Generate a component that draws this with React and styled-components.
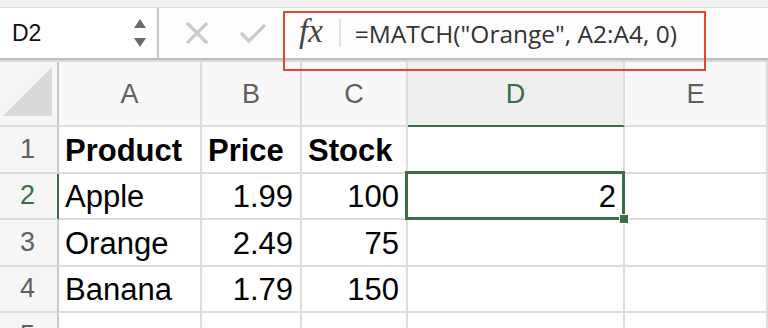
import React from 'react'
import styled, { createGlobalStyle } from 'styled-components'

const GlobalStyle = createGlobalStyle`
  html, body {
    margin: 0;
    padding: 0;
    background: #ffffff;
    overflow: hidden;
  }
  * { box-sizing: border-box; }
`

const GREEN = '#3b6e47'
const GRID = '#dcdcdc'

const columns = ['A', 'B', 'C', 'D', 'E']

const rows = [
  { n: 1, cells: [{ v: 'Product', bold: true }, { v: 'Price', bold: true }, { v: 'Stock', bold: true }, { v: '' }, { v: '' }] },
  { n: 2, cells: [{ v: 'Apple' }, { v: '1.99', num: true }, { v: '100', num: true }, { v: '2', num: true, selected: true }, { v: '' }] },
  { n: 3, cells: [{ v: 'Orange' }, { v: '2.49', num: true }, { v: '75', num: true }, { v: '' }, { v: '' }] },
  { n: 4, cells: [{ v: 'Banana' }, { v: '1.79', num: true }, { v: '150', num: true }, { v: '' }, { v: '' }] },
  { n: 5, cells: [{ v: '' }, { v: '' }, { v: '' }, { v: '' }, { v: '' }] },
]

function App() {
  return (
    <>
      <GlobalStyle />
      <Window>
        <TopStrip />
        <Toolbar>
          <NameBox>
            <CellRef>D2</CellRef>
            <Spinner>
              <svg width="14" height="34" viewBox="0 0 14 34">
                <path d="M7 3 L13 12 L1 12 Z" fill="#6b6b6b" />
                <path d="M7 31 L13 22 L1 22 Z" fill="#6b6b6b" />
              </svg>
            </Spinner>
          </NameBox>
          <FormulaArea>
            <ActionIcon>
              <svg width="24" height="22" viewBox="0 0 24 22">
                <path d="M3 2 L21 20 M21 2 L3 20" stroke="#cacaca" strokeWidth="3.2" strokeLinecap="square" />
              </svg>
            </ActionIcon>
            <ActionIcon>
              <svg width="28" height="22" viewBox="0 0 28 22">
                <path d="M2 11 L10 19 L26 3" stroke="#cacaca" strokeWidth="3.2" fill="none" />
              </svg>
            </ActionIcon>
            <Fx>fx</Fx>
            <FxDivider />
            <FormulaText>=MATCH("Orange", A2:A4, 0)</FormulaText>
          </FormulaArea>
          <Highlight />
        </Toolbar>
        <ToolbarEdge />
        <Sheet>
          <Corner>
            <svg width="54" height="54" viewBox="0 0 54 54">
              <path d="M51 2 L51 51 L2 51 Z" fill="#d9d9d9" />
            </svg>
          </Corner>
          {columns.map((c) => (
            <ColHeader key={c} $active={c === 'D'}>{c}</ColHeader>
          ))}
          {rows.map((r) => (
            <React.Fragment key={r.n}>
              <RowHeader $active={r.n === 2}>{r.n}</RowHeader>
              {r.cells.map((cell, i) => (
                <Cell key={i} $bold={cell.bold} $num={cell.num} $selected={cell.selected}>
                  {cell.v}
                  {cell.selected && (
                    <Selection>
                      <FillHandle />
                    </Selection>
                  )}
                </Cell>
              ))}
            </React.Fragment>
          ))}
        </Sheet>
      </Window>
    </>
  )
}
export default App

const Window = styled.div`
  width: 768px;
  height: 328px;
  display: flex;
  flex-direction: column;
  background: #ffffff;
  overflow: hidden;
`

const TopStrip = styled.div`
  flex-shrink: 0;
  height: 8px;
  background: #f1f1f1;
  border-bottom: 1px solid #dddddd;
`

const Toolbar = styled.div`
  flex-shrink: 0;
  position: relative;
  height: 50px;
  display: flex;
  background: #ffffff;
`

const NameBox = styled.div`
  width: 159px;
  display: flex;
  align-items: center;
  justify-content: space-between;
  padding: 0 10px 0 12px;
  border-right: 2px solid #c9c9c9;
  background: #ffffff;
`

const CellRef = styled.span`
  font-family: "Liberation Sans", Arial, sans-serif;
  font-size: 23px;
  color: #111111;
`

const Spinner = styled.div`
  display: flex;
  align-items: center;
`

const FormulaArea = styled.div`
  flex: 1;
  display: flex;
  align-items: center;
  padding-left: 26px;
  background: #fdfdfd;
`

const ActionIcon = styled.div`
  display: flex;
  align-items: center;
  margin-right: 30px;
`

const Fx = styled.span`
  font-family: "Liberation Serif", "Times New Roman", serif;
  font-style: italic;
  font-size: 33px;
  color: #444444;
  margin-left: 2px;
  margin-top: -4px;
`

const FxDivider = styled.div`
  width: 2px;
  height: 28px;
  background: #e2e2e2;
  margin: 0 14px 0 16px;
`

const FormulaText = styled.span`
  font-family: "Open Sans", "Liberation Sans", sans-serif;
  font-size: 24.5px;
  color: #333333;
`

const Highlight = styled.div`
  position: absolute;
  left: 283px;
  top: 3px;
  width: 423px;
  height: 60px;
  border: 2.5px solid #e8452e;
  z-index: 3;
  pointer-events: none;
`

const ToolbarEdge = styled.div`
  flex-shrink: 0;
  height: 4px;
  background: #dadada;
  border-top: 2px solid #bdbdbd;
`

const Sheet = styled.div`
  flex-shrink: 0;
  display: grid;
  grid-template-columns: 59px 143px 100px 106px 217px 1fr;
  grid-template-rows: 65px repeat(5, 46.5px);
  font-family: "Liberation Sans", Arial, sans-serif;
`

const Corner = styled.div`
  background: #f6f6f6;
  border-right: 2px solid #c8c8c8;
  border-bottom: 2px solid ${GRID};
  display: flex;
  align-items: flex-end;
  padding: 0 0 6px 1px;
`

const ColHeader = styled.div`
  display: flex;
  align-items: center;
  justify-content: center;
  font-size: 27px;
  color: ${(p) => (p.$active ? GREEN : '#5f5f5f')};
  background: ${(p) => (p.$active ? '#efefef' : '#f8f8f8')};
  border-right: 2px solid ${GRID};
  border-bottom: 2px solid ${(p) => (p.$active ? GREEN : GRID)};
  padding-top: 2px;
`

const RowHeader = styled.div`
  display: flex;
  align-items: center;
  justify-content: center;
  font-size: 27px;
  color: ${(p) => (p.$active ? GREEN : '#606060')};
  background: #f6f6f6;
  border-right: 2px solid ${(p) => (p.$active ? GREEN : '#c8c8c8')};
  border-bottom: 2px solid ${GRID};
  padding-right: 2px;
`

const Cell = styled.div`
  position: relative;
  z-index: ${(p) => (p.$selected ? 2 : 'auto')};
  display: flex;
  align-items: center;
  justify-content: ${(p) => (p.$num ? 'flex-end' : 'flex-start')};
  padding: 3px 7px 0 6px;
  font-size: 31px;
  font-weight: ${(p) => (p.$bold ? 700 : 400)};
  color: #000000;
  border-right: 2px solid ${GRID};
  border-bottom: 2px solid ${GRID};
  white-space: nowrap;
`

const Selection = styled.div`
  position: absolute;
  left: -3px;
  top: -3px;
  right: -2px;
  bottom: -2px;
  border: 3px solid ${GREEN};
  pointer-events: none;
`

const FillHandle = styled.div`
  position: absolute;
  right: -7px;
  bottom: -7px;
  width: 10px;
  height: 10px;
  background: ${GREEN};
  border: 1px solid #ffffff;
`
